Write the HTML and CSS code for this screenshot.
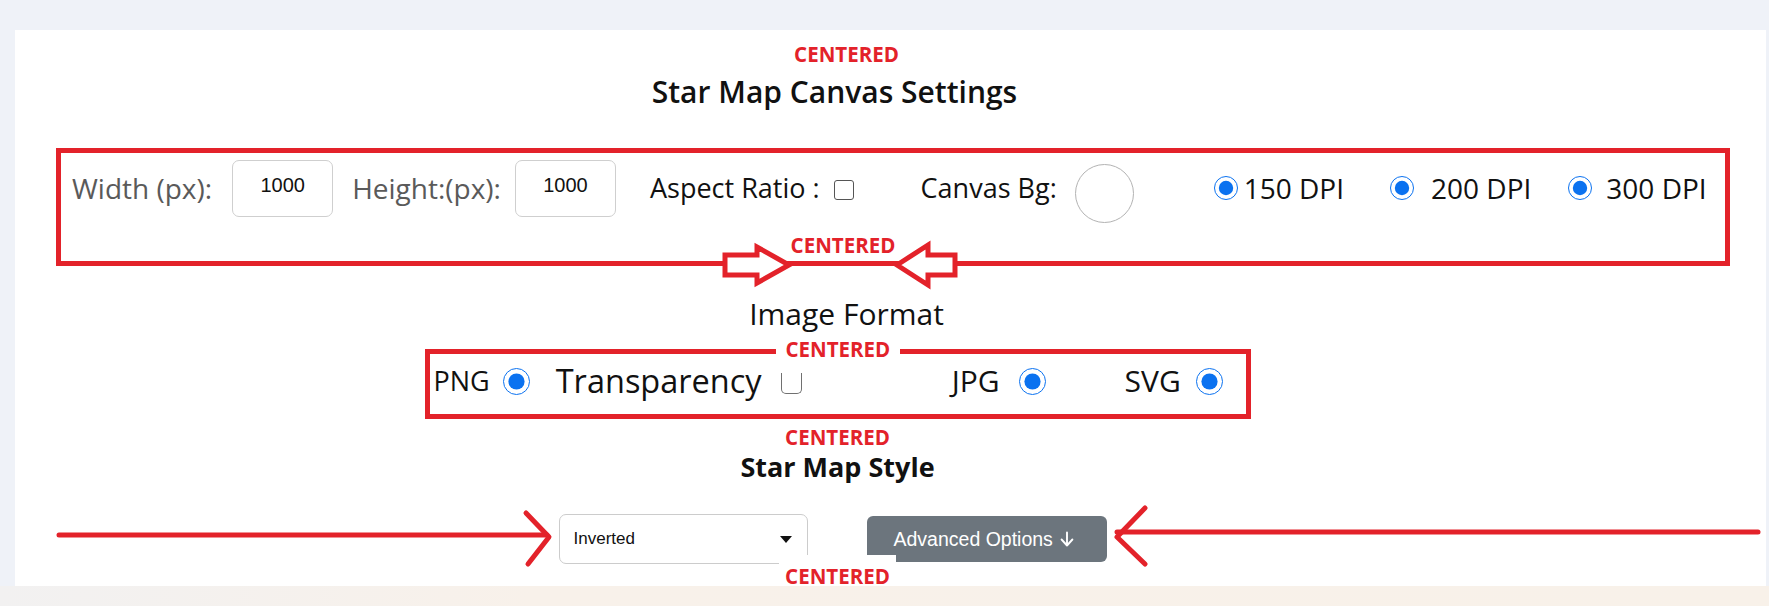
FILE: index.html
```html
<!DOCTYPE html>
<html lang="en">
<head>
<meta charset="utf-8">
<title>Star Map Canvas Settings</title>
<link rel="stylesheet" href="styles.css">
</head>
<body>
<div class="page">
  <div class="panel">
    <div class="note note-top">CENTERED</div>
    <h2 class="title">Star Map Canvas Settings</h2>

    <div class="box box-canvas">
      <div class="row1">
        <span class="lbl lbl-gray">Width (px):</span>
        <input class="num ml20" type="text" value="1000">
        <span class="lbl lbl-gray ml19">Height:(px):</span>
        <input class="num ml14" type="text" value="1000">
        <span class="lbl lbl-sm ml34">Aspect Ratio :</span>
        <span class="check ml14"></span>
        <span class="lbl lbl-sm ml67">Canvas Bg:</span>
        <span class="swatch ml18"></span>
        <input class="radio ml80" type="radio" name="dpi1" checked>
        <span class="lbl ml6">150 DPI</span>
        <input class="radio ml46" type="radio" name="dpi2" checked>
        <span class="lbl ml17">200 DPI</span>
        <input class="radio ml37" type="radio" name="dpi3" checked>
        <span class="lbl ml14">300 DPI</span>
      </div>
      <div class="note note-in">CENTERED</div>
    </div>

    <h3 class="subtitle">Image Format</h3>

    <div class="box box-format shift">
      <span class="fmt">PNG</span>
      <input class="radio radio-lg ml13" type="radio" name="f1" checked>
      <span class="fmt fmt-big ml26">Transparency</span>
      <span class="check check-open ml19"></span>
      <span class="fmt fmt-wide ml150">JPG</span>
      <input class="radio radio-lg ml19" type="radio" name="f2" checked>
      <span class="fmt fmt-wide ml79">SVG</span>
      <input class="radio radio-lg ml15" type="radio" name="f3" checked>
      <div class="note note-border">CENTERED</div>
    </div>

    <div class="note note-mid shift">CENTERED</div>
    <h3 class="style-title shift">Star Map Style</h3>

    <div class="controls">
      <div class="select"><span>Inverted</span><span class="caret"></span></div>
      <button class="adv" type="button">Advanced Options
        <svg class="adv-icon" viewBox="0 0 14 16" width="14" height="16"><path d="M7 1.5V14.5M1.6 8.5L7 14.5L12.4 8.5" fill="none" stroke="#fff" stroke-width="1.9" stroke-linecap="round" stroke-linejoin="round"/></svg>
      </button>
    </div>
    <div class="note note-bottom">CENTERED</div>

    <svg class="marks" viewBox="0 0 1751 556" width="1751" height="556">
      <g fill="#fff" stroke="#e3222a" stroke-width="5" stroke-linejoin="miter">
        <polygon points="710,225 742,225 742,217 774,235 742,253 742,245 710,245"/>
        <polygon points="882,235 913,215 913,225 940,225 940,245 913,245 913,255"/>
      </g>
      <g fill="none" stroke="#e3222a" stroke-width="5" stroke-linecap="round" stroke-linejoin="round">
        <path d="M44 505H532"/>
        <path d="M511 483L534 507L513 534"/>
        <path d="M1102 502H1743"/>
        <path d="M1130 478L1102 507L1130 534"/>
      </g>
    </svg>
  </div>
  <div class="floor"></div>
</div>
</body>
</html>
```

FILE: styles.css
```css
* { box-sizing: border-box; }

html, body {
  margin: 0;
  padding: 0;
}

body {
  width: 1769px;
  height: 606px;
  overflow: hidden;
  background: #eff2f8;
  font-family: "Open Sans", "DejaVu Sans", sans-serif;
  color: #111;
}

.page {
  padding-top: 30px;
}

.panel {
  position: relative;
  margin-left: 15px;
  width: 1751px;
  height: 556px;
  background: #fff;
  display: flex;
  flex-direction: column;
  align-items: center;
}

.floor {
  height: 20px;
  background: linear-gradient(90deg, #f2f1f1 0%, #f8f1ea 30%, #f8f1e9 100%);
}

.shift { margin-right: 106px; }

/* annotation labels */
.note {
  font-weight: 700;
  font-size: 20.5px;
  line-height: 20px;
  color: #e3222a;
  white-space: nowrap;
}
.note-top { margin-top: 14px; margin-right: 88px; }
.note-in { align-self: center; margin-top: 18px; margin-right: 100px; }
.note-mid { margin-top: 8px; }
.note-bottom {
  position: relative;
  z-index: 1;
  margin-top: -9px;
  margin-right: 106px;
  padding: 11px 6px 0;
  background: #fff;
}
.note-border {
  position: absolute;
  top: -16px;
  left: 346px;
  padding: 1px 10px;
  line-height: 20px;
  background: #fff;
}

.title {
  margin: 10px 112px 0 0;
  font-size: 30px;
  font-weight: 600;
  line-height: 36px;
}

.box {
  border: 5px solid #e3222a;
}

.box-canvas {
  align-self: flex-start;
  margin: 38px 0 0 41px;
  width: 1674px;
  height: 118px;
  display: flex;
  flex-direction: column;
}

.row1 {
  display: flex;
  align-items: center;
  height: 64px;
  padding: 6px 0 0 11px;
}

.lbl {
  font-size: 28px;
  line-height: 36px;
  color: #111;
  white-space: nowrap;
}
.lbl-sm { font-size: 27px; }
.lbl-gray {
  color: #5a5a5a;
  font-weight: 500;
}

.num {
  width: 101px;
  height: 57px;
  margin-top: 0;
  border: 1px solid #cfcfcf;
  border-radius: 7px;
  padding: 0 0 6px;
  font-family: "Liberation Sans", Arial, sans-serif;
  font-size: 20px;
  color: #111;
  text-align: center;
  outline: none;
}

.check {
  display: inline-block;
  width: 20px;
  height: 20px;
  border: 1.6px solid #555;
  border-radius: 3px;
  margin-top: 4px;
}
.check-open {
  width: 21px;
  height: 21px;
  border-color: #707070;
  border-top: none;
  border-radius: 0 0 5px 5px;
}

.swatch {
  display: inline-block;
  width: 59px;
  height: 59px;
  border: 1px solid #b3b3b3;
  border-radius: 50%;
  margin-top: 10px;
}

.radio {
  width: 24px;
  height: 24px;
  margin: 0;
  accent-color: #0b72f0;
  flex: none;
}
.radio-lg {
  width: 27px;
  height: 27px;
}

.subtitle {
  margin: 31px 88px 0 0;
  font-size: 30px;
  font-weight: 400;
  line-height: 34px;
}

.box-format {
  position: relative;
  margin-top: 18px;
  width: 826px;
  height: 70px;
  display: flex;
  align-items: center;
  padding: 0 0 6px 4px;
}

.fmt {
  font-size: 27px;
  line-height: 34px;
  color: #111;
  white-space: nowrap;
}
.fmt-big { font-size: 32.5px; }
.fmt-wide { font-size: 30px; }

.style-title {
  margin-top: 4px;
  margin-bottom: 0;
  font-size: 27px;
  font-weight: 700;
  line-height: 32px;
}

.controls {
  margin-top: 31px;
  margin-right: 116px;
  display: flex;
  align-items: center;
  gap: 59px;
}

.select {
  width: 249px;
  height: 50px;
  border: 1px solid #cccccc;
  border-radius: 7px;
  display: flex;
  align-items: center;
  justify-content: space-between;
  padding: 0 15px 0 14px;
  font-family: "Liberation Sans", Arial, sans-serif;
  font-size: 17px;
  color: #111;
}
.caret {
  width: 0;
  height: 0;
  border-left: 6px solid transparent;
  border-right: 6px solid transparent;
  border-top: 7px solid #111;
}

.adv {
  width: 240px;
  height: 46px;
  border: none;
  border-radius: 6px;
  background: #6c757d;
  color: #fff;
  font-family: "Liberation Sans", Arial, sans-serif;
  font-size: 19.5px;
  display: flex;
  align-items: center;
  padding: 0 0 0 27px;
  gap: 7px;
}
.adv-icon { flex: none; }

.marks {
  position: absolute;
  left: 0;
  top: 0;
  z-index: 2;
  pointer-events: none;
}

.ml6 { margin-left: 6px; }
.ml13 { margin-left: 13px; }
.ml14 { margin-left: 14px; }
.ml15 { margin-left: 15px; }
.ml17 { margin-left: 17px; }
.ml18 { margin-left: 18px; }
.ml19 { margin-left: 19px; }
.ml20 { margin-left: 20px; }
.ml26 { margin-left: 26px; }
.ml34 { margin-left: 34px; }
.ml37 { margin-left: 37px; }
.ml46 { margin-left: 46px; }
.ml67 { margin-left: 67px; }
.ml79 { margin-left: 79px; }
.ml80 { margin-left: 80px; }
.ml150 { margin-left: 150px; }
```
